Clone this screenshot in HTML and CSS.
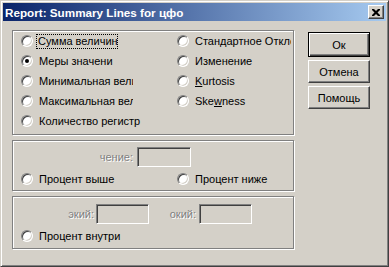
FILE: index.html
```html
<!DOCTYPE html>
<html lang="ru">
  <head>
    <meta charset="UTF-8" />
    <title>Report: Summary Lines for цфо</title>
    <link rel="stylesheet" href="styles.css">
  </head>
  <body>
    <div class="window">
      <div class="titlebar">
        <span class="title">Report: Summary Lines for цфо</span>
        <button class="close" aria-label="Закрыть">
          <svg width="8" height="7" viewBox="0 0 8 7">
            <path d="M0 0h2l2 2 2-2h2v1l-2.5 2.5 2.5 2.5v1h-2l-2-2-2 2h-2v-1l2.5-2.5-2.5-2.5z" fill="#000"/>
          </svg>
        </button>
      </div>

      <div class="content">
        <div class="groups">
          <fieldset class="group stats">
            <div class="col left">
              <label class="opt"><span class="radio"></span><span class="text focus w80">Сумма величин</span></label>
              <label class="opt"><span class="radio checked"></span><span class="text">Меры значени</span></label>
              <label class="opt"><span class="radio"></span><span class="text w96">Минимальная величина</span></label>
              <label class="opt"><span class="radio"></span><span class="text w96">Максимальная величина</span></label>
              <label class="opt"><span class="radio"></span><span class="text">Количество регистр</span></label>
            </div>
            <div class="col right">
              <label class="opt"><span class="radio"></span><span class="text w94">Стандартное Отклонение</span></label>
              <label class="opt"><span class="radio"></span><span class="text">Изменение</span></label>
              <label class="opt"><span class="radio"></span><span class="text"><u>K</u>urtosis</span></label>
              <label class="opt"><span class="radio"></span><span class="text">Ske<u>w</u>ness</span></label>
            </div>
          </fieldset>

          <fieldset class="group percent">
            <div class="field-row">
              <span class="caption cap-value">чение:</span>
              <span class="edit"></span>
            </div>
            <div class="radio-row">
              <label class="opt"><span class="radio"></span><span class="text">Процент выше</span></label>
              <label class="opt"><span class="radio"></span><span class="text">Процент ниже</span></label>
            </div>
          </fieldset>

          <fieldset class="group range">
            <div class="field-row">
              <span class="caption cap-low">экий:</span>
              <span class="edit narrow"></span>
              <span class="caption cap-high">окий:</span>
              <span class="edit narrow"></span>
            </div>
            <div class="radio-row">
              <label class="opt"><span class="radio"></span><span class="text">Процент внутри</span></label>
            </div>
          </fieldset>
        </div>

        <div class="buttons">
          <button class="btn default">Ок</button>
          <button class="btn">Отмена</button>
          <button class="btn">Помощь</button>
        </div>
      </div>
    </div>
  </body>
</html>
```

FILE: styles.css
```css
*,
*::before,
*::after {
  box-sizing: border-box;
}

body {
  margin: 0;
  font-family: "Liberation Sans", Arial, sans-serif;
  font-size: 11px;
  color: #000;
}

.window {
  width: 389px;
  height: 267px;
  padding: 1px;
  background: #d4d0c8;
  border: 1px solid;
  border-color: #d4d0c8 #404040 #404040 #d4d0c8;
  box-shadow: inset 1px 1px #fff, inset -1px -1px #808080;
}

.titlebar {
  display: flex;
  align-items: center;
  justify-content: space-between;
  height: 18px;
  margin: 1px;
  padding: 0 2px 0 2px;
  background: linear-gradient(to right, #0a246a, #a6caf0);
}

.title {
  color: #fff;
  font-weight: bold;
  font-size: 11.7px;
  white-space: nowrap;
}

.close {
  display: flex;
  align-items: center;
  justify-content: center;
  width: 16px;
  height: 14px;
  padding: 0;
  background: #d4d0c8;
  border: 1px solid;
  border-color: #fff #404040 #404040 #fff;
  box-shadow: inset -1px -1px #808080;
}

.content {
  display: flex;
  padding: 8px 0 0 10px;
}

.groups {
  display: flex;
  flex-direction: column;
  gap: 5px;
  width: 282px;
}

.group {
  margin: 0;
  padding: 0;
  min-width: 0;
  border: 1px solid #808080;
  box-shadow: inset 1px 1px #fff, 1px 1px #fff;
}

.stats {
  display: flex;
  height: 105px;
  padding-left: 8px;
}

.col {
  display: flex;
  flex-direction: column;
}

.col.left {
  flex: none;
  width: 156px;
}

.opt {
  display: flex;
  align-items: center;
  height: 20px;
  white-space: nowrap;
}

.radio {
  position: relative;
  flex: none;
  width: 12px;
  height: 12px;
  border-radius: 50%;
  background: #fff;
  border: 1px solid;
  border-color: #808080 #fff #fff #808080;
  box-shadow: inset 1px 1px #404040, inset -1px -1px #d4d0c8;
}

.radio.checked::after {
  content: "";
  position: absolute;
  left: 3px;
  top: 3px;
  width: 4px;
  height: 4px;
  border-radius: 50%;
  background: #000;
}

.text {
  margin-left: 4px;
  padding: 0 1px;
  line-height: 13px;
  border: 1px solid transparent;
  overflow: hidden;
}

.focus {
  margin-left: 3px;
  padding: 0 0 0 1px;
  border: 1px dotted #000;
}

.w80 {
  width: 82px;
}

.w94 {
  width: 99px;
}

.w96 {
  width: 97px;
}

.percent {
  height: 51px;
  padding: 6px 0 0 8px;
}

.range {
  height: 53px;
  padding: 7px 0 0 8px;
}

.field-row {
  display: flex;
  align-items: center;
}

.caption {
  flex: none;
  color: #808080;
  text-shadow: 1px 1px 0 #fff;
  text-align: right;
  white-space: nowrap;
}

.cap-value {
  width: 112px;
  margin-right: 4px;
}

.cap-low {
  width: 73px;
  margin-right: 2px;
}

.cap-high {
  width: 47px;
  margin-right: 3px;
}

.edit {
  flex: none;
  width: 54px;
  height: 20px;
  background: #d4d0c8;
  border: 1px solid;
  border-color: #808080 #fff #fff #808080;
  box-shadow: inset 1px 1px #404040, inset -1px -1px #d4d0c8;
}

.edit.narrow {
  width: 53px;
}

.radio-row {
  display: flex;
  margin-top: 2px;
}

.radio-row .opt {
  flex: none;
  width: 156px;
}

.buttons {
  display: flex;
  flex-direction: column;
  gap: 3px;
  margin: 2px 0 0 14px;
}

.btn {
  width: 62px;
  height: 23px;
  padding: 0;
  font-family: "Liberation Sans", Arial, sans-serif;
  font-size: 11px;
  color: #000;
  background: #d4d0c8;
  border: 1px solid;
  border-color: #fff #404040 #404040 #fff;
  box-shadow: inset -1px -1px #808080;
}

.btn.default {
  height: 25px;
  border-color: #000;
  box-shadow: inset 1px 1px #fff, inset -1px -1px #404040, inset -2px -2px #808080;
}
```
